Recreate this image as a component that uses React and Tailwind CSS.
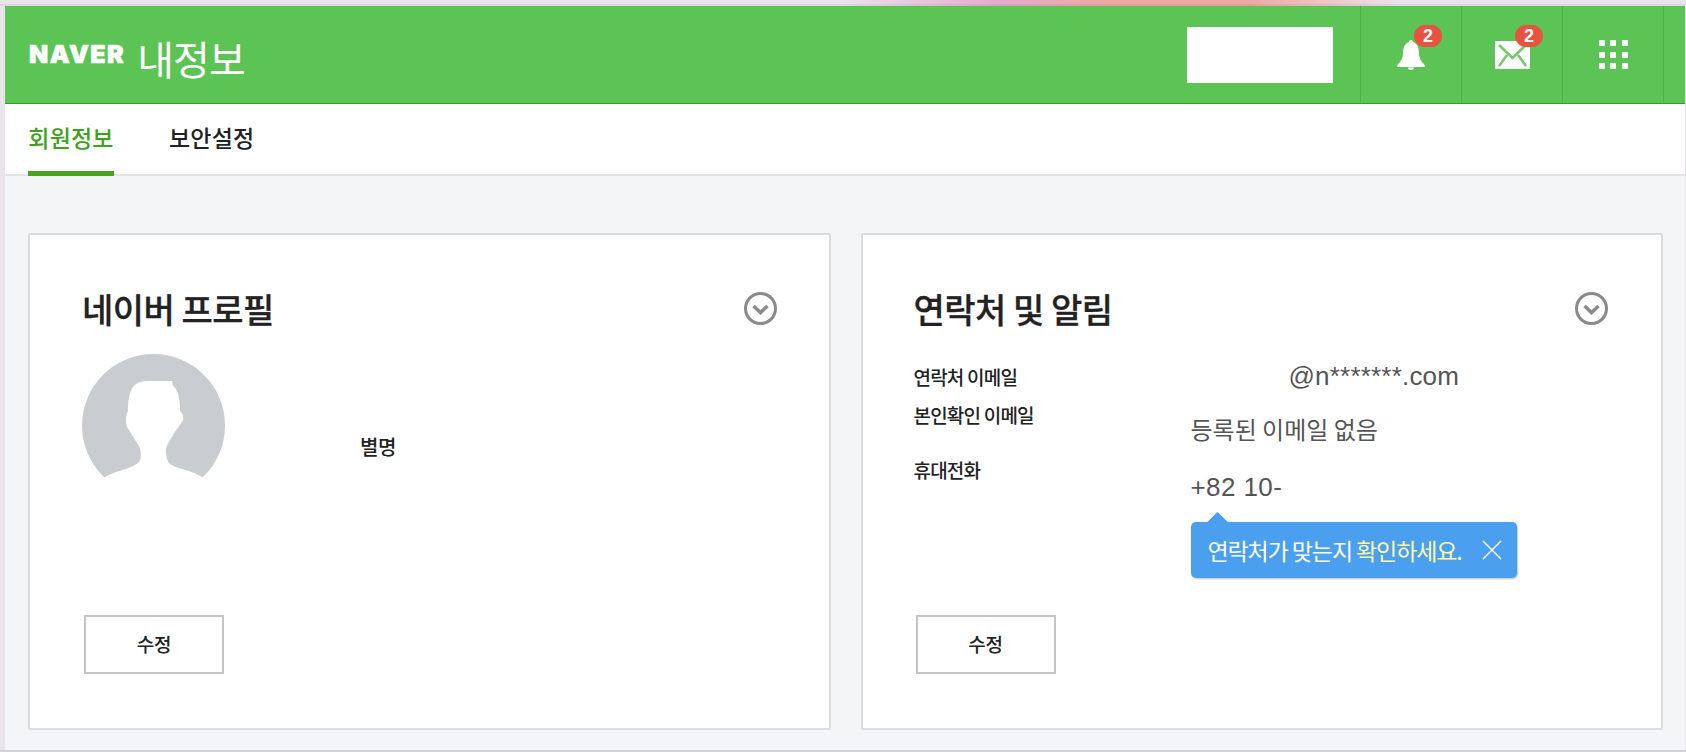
const KR = "font-['Noto_Sans_CJK_KR','Noto_Sans',sans-serif]";

const Bell = () => (
  <svg width="28" height="30" viewBox="0 0 28 30" fill="#fff">
    <path d="M14 0c-1.500 0-2 1-2 2C7.500 3.500 6 8 6 13c0 4-1 6.500-3 9-1 1.200-3 2.500-3 4 0 .8.600 1 1.500 1h25c.9 0 1.500-.2 1.500-1 0-1.500-2-2.800-3-4-2-2.500-3-5-3-9 0-5-1.500-9.500-6-11 0-1-.5-2-2-2z" />
    <path d="M11 27.500h6c0 1.500-1.300 2.500-3 2.500s-3-1-3-2.500z" />
  </svg>
);

const Mail = () => (
  <svg width="35" height="28" viewBox="0 0 35 28">
    <rect width="35" height="28" fill="#fff" />
    <path d="M4 4l13.500 13L31 4M4 25l8-11M31 25l-8-11" fill="none" stroke="#6fcb68" strokeWidth="2.500" />
  </svg>
);

const Badge = () => (
  <span className="absolute top-[19px] left-[53px] flex h-[22px] w-[28px] items-center justify-center rounded-full bg-[#e8523f] font-['Liberation_Sans',sans-serif] text-[18px] leading-none font-bold text-white">
    2
  </span>
);

const Chevron = () => (
  <svg width="35" height="35" viewBox="0 0 35 35" fill="none" stroke="#8a8a8a">
    <circle cx="17.500" cy="17.500" r="15" strokeWidth="3" />
    <path d="M10.500 15l7 6.500 7-6.500" strokeWidth="3.500" />
  </svg>
);

const EditButton = () => (
  <button className={`${KR} mt-auto ml-[2px] h-[59px] w-[140px] border-2 border-[#c4c4c4] bg-white text-[19px] font-medium tracking-[-0.3px] text-[#222]`}>
    수정
  </button>
);

const Avatar = () => (
  <svg width="143" height="143" viewBox="0 0 143 143" className="shrink-0">
    <circle cx="71.500" cy="71.500" r="71.500" fill="#c9ccd1" />
    <path
      fill="#fff"
      d="M23 123C35 116 55 114 58 106C60 100 58 96 58 94C55 88 50 82 47 76C43 72 43 62 46 57C46 42 48 27 65 27L90 27L91 32C97 36 98 48 98 57C102 60 102 66 100 68C97 73 92 78 90 83C87 88 84 92 84 96C84 102 85 107 88 110C95 115 110 116 120 123L143 143L0 143Z"
    />
  </svg>
);

const CardTitle = ({ children }) => (
  <div className="mb-[27px] flex h-[37px] items-center justify-between">
    <h2 className={`${KR} text-[34px] leading-[36px] font-medium tracking-[-0.5px] text-[#222] [-webkit-text-stroke:0.3px_#222]`}>{children}</h2>
    <Chevron />
  </div>
);

export default function App() {
  return (
    <div className="flex h-[752px] w-[1686px] flex-col overflow-hidden bg-[#e8e4ea]">
      {/* top strip of the window behind */}
      <div className="h-[6px] shrink-0 border-b-2 border-b-black/5 bg-[linear-gradient(90deg,#e8e4ea_50%,#e3aecb_59%,#efa8a2_66%,#efa8a2_74%,#e8e4ea_83%)]" />

      <div className="ml-[5px] mr-[1px] flex h-[744px] flex-col bg-[#f4f5f7]">
        <header className="flex h-[98px] shrink-0 items-stretch border-b border-b-[#2f9f1e] bg-[#5bc454] pl-[24px]">
          <div className="flex items-center">
            <span className="font-['Inter',sans-serif] text-[25px] leading-none font-black tracking-[1.5px] text-white [-webkit-text-stroke:0.6px_white]">NAVER</span>
            <span className={`${KR} mt-[6px] ml-[12px] text-[40px] leading-none font-normal tracking-[-1px] text-white`}>내정보</span>
          </div>

          <div className="ml-auto flex items-center">
            <div className="mr-[27px] h-[56px] w-[146px] bg-white" />
          </div>
          {/* bell, mail, apps */}
          <div className="relative flex w-[101px] items-center justify-center border-l border-l-[#4fb048]">
            <Bell />
            <Badge />
          </div>
          <div className="relative flex w-[101px] items-center justify-center border-l border-l-[#4fb048]">
            <Mail />
            <Badge />
          </div>
          <div className="flex w-[101px] items-center justify-center border-l border-l-[#4fb048]">
            <div className="grid grid-cols-3 gap-[5.500px]">
              {Array.from({ length: 9 }).map((_, i) => (
                <span key={i} className="h-[6px] w-[6px] rounded-[1px] bg-white" />
              ))}
            </div>
          </div>
          <div className="w-[22px] border-l border-l-[#4fb048]" />
        </header>

        <nav className={`${KR} flex h-[72px] shrink-0 items-stretch gap-[55px] border-b-2 border-b-[#e4e4e6] bg-white pl-[23px] text-[23px] font-medium`}>
          <a className="-mb-[2px] flex w-[86px] items-center justify-center border-b-[5px] border-b-[#46a41f] whitespace-nowrap tracking-[0.2px] text-[#3fa21d]">회원정보</a>
          <a className="flex items-center pb-[3px] tracking-[0.2px] text-[#222]">보안설정</a>
        </nav>

        <main className="flex flex-1 gap-[30px] pt-[57px] pr-[22px] pb-[20px] pl-[23px]">
          <section className="flex flex-1 flex-col rounded-[2px] border-2 border-[#dcdce0] bg-white pt-[55px] pr-[51px] pb-[54px] pl-[52px]">
            <CardTitle>네이버 프로필</CardTitle>
            <div className="flex">
              <Avatar />
              <div className={`${KR} ml-[135px] pt-[81px] text-[20px] leading-[24px] font-medium tracking-[-0.5px] text-[#222]`}>별명</div>
            </div>
            <EditButton />
          </section>

          <section className="flex flex-1 flex-col rounded-[2px] border-2 border-[#dcdce0] bg-white pt-[55px] pr-[52px] pb-[54px] pl-[51px]">
            <CardTitle>연락처 및 알림</CardTitle>

            <div className={`${KR} mt-[11px] text-[19px] leading-[24px] font-medium tracking-[-0.8px] text-[#222]`}>
              <div className="flex h-[38px] items-start">
                <div className="w-[277px]">연락처 이메일</div>
                <div className="-mt-[4px] pl-[98px] font-['Liberation_Sans',sans-serif] text-[26px] leading-[30px] font-normal tracking-[0.2px] text-[#555]">@n*******.com</div>
              </div>
              <div className="flex h-[55px] items-start">
                <div className="w-[277px]">본인확인 이메일</div>
                <div className="mt-[11px] text-[24px] leading-[30px] font-normal tracking-[0px] text-[#555]">등록된 이메일 없음</div>
              </div>
              <div className="flex items-start">
                <div className="w-[277px]">휴대전화</div>
                <div className="mt-[14px]">
                  <div className="font-['Liberation_Sans',sans-serif] text-[26px] leading-[30px] font-normal tracking-[0.4px] text-[#555]">+82 10-</div>
                  <div className="relative mt-[20px] flex h-[56px] w-[326px] items-center justify-between rounded-[5px] bg-[#4aa0ef] pr-[15px] pl-[17px] text-[23px] font-normal tracking-[-1.1px] text-white shadow-[1px_1px_2px_rgba(0,0,0,0.25)]">
                    <span className="absolute top-[-7px] left-[19px] h-[15px] w-[15px] rotate-45 rounded-[1px] bg-[#4aa0ef]" />
                    <span className="relative">
                      연락처가 맞는지 <span className="text-[#fdf8a8]">확인하세요.</span>
                    </span>
                    <svg width="20" height="20" viewBox="0 0 20 20" stroke="#fff" strokeWidth="1.500">
                      <path d="M1 1l18 18M19 1L1 19" />
                    </svg>
                  </div>
                </div>
              </div>
            </div>
            <EditButton />
          </section>
        </main>
      </div>
      <div className="h-[2px] shrink-0 bg-[#d4d2d6]" />
    </div>
  );
}
